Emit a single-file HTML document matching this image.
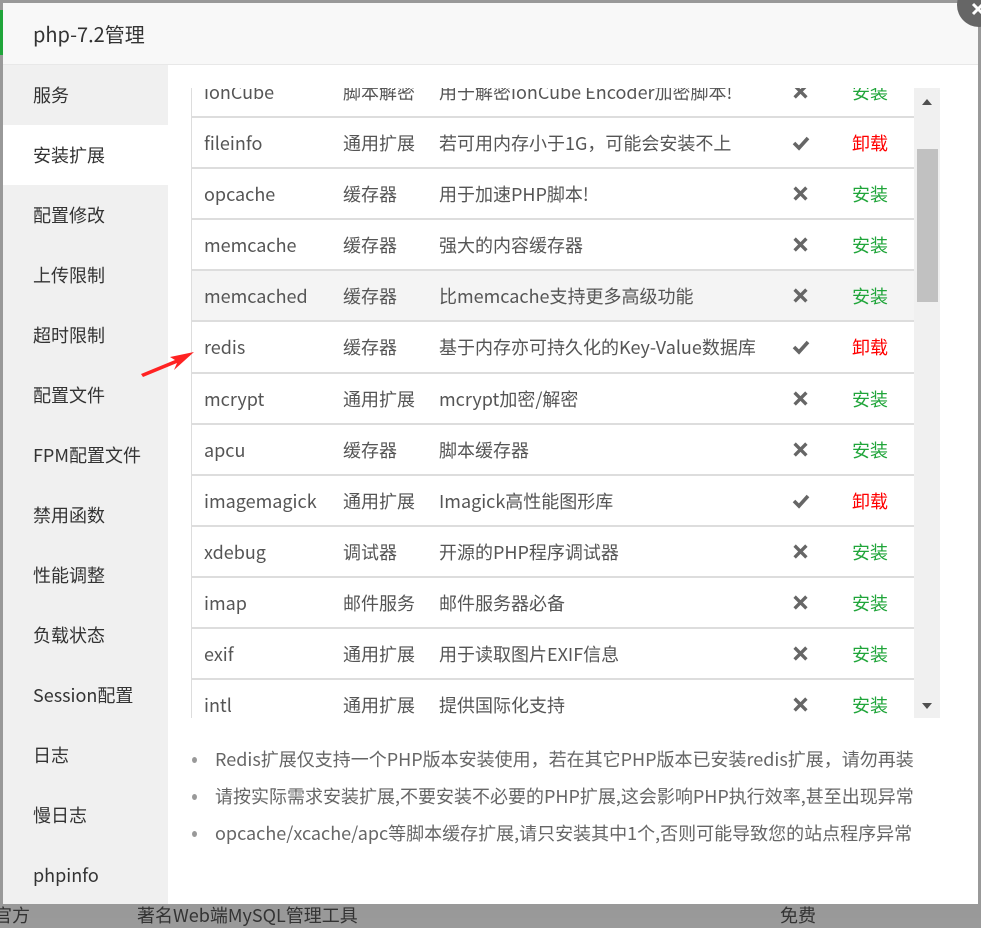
<!DOCTYPE html>
<html><head><meta charset="utf-8"><style>
*{margin:0;padding:0;box-sizing:border-box}
body{width:981px;height:918px;overflow:hidden;background:#9a9a9a;font-family:"Noto Sans CJK SC","Liberation Sans",sans-serif;position:relative}
.bg{position:absolute;top:0;left:0;width:981px;height:918px;background:#999}
.bgtext{position:absolute;top:903px;color:#333;font-size:18px;line-height:24px}
.modal{position:absolute;left:3px;top:3px;width:975px;height:901px;background:#fff;overflow:hidden}
.title{height:62px;background:#f8f8f8;border-bottom:1px solid #e8e8e8;font-size:20px;color:#333;padding-left:30px;line-height:62px}
.side{position:absolute;left:0;top:62px;width:165px;bottom:0;background:#f0f0f0}
.side div{height:60px;line-height:60px;padding-left:30px;font-size:18px;color:#333}
.side .act{background:#fff}
.tbl{position:absolute;left:188px;top:85px;width:723px;height:630px;overflow:hidden;border-left:1px solid #ddd}
.rows{position:absolute;top:-21px;left:0;width:723px}
.row{height:51.1px;border-bottom:2px solid #ddd;position:relative;font-size:18px;color:#555}
.row span{position:absolute;top:0;line-height:51px;white-space:nowrap}
.row .n{left:12px}.row .t{left:151px}.row .d{left:247px}
.row .a{left:660px;color:#20a53a}
.row .a.u{color:#f00}
.hl{background:#f4f4f4}
.sb{position:absolute;left:911px;top:85px;width:26px;height:630px;background:#f0f0f0}
.thumb{position:absolute;left:3px;top:61px;width:21px;height:153px;background:#c1c1c1}
.notes{position:absolute;left:188px;top:742px;font-size:18px;color:#666}
.notes div{height:37px;line-height:28px;position:relative;padding-left:24px;white-space:nowrap}
.notes div:before{content:"";position:absolute;left:1px;top:12px;width:5px;height:6px;border-radius:50%;background:#999}
.close{position:absolute;left:957px;top:-17px;width:44px;height:44px;border-radius:50%;background:#666}
</style></head><body>
<div class="bg"></div>
<div style="position:absolute;left:0;top:10px;width:3px;height:45px;background:#20a53a"></div>
<div class="bgtext" style="left:-6px">官方</div>
<div class="bgtext" style="left:137px">著名Web端MySQL管理工具</div>
<div class="bgtext" style="left:780px">免费</div>
<svg width="0" height="0" style="position:absolute"><defs>
<symbol id="x" viewBox="0 0 16 16"><path d="M3 3L13 13M13 3L3 13" stroke="#666" stroke-width="3.6" stroke-linecap="square"/></symbol>
<symbol id="c" viewBox="0 0 18 16"><path d="M2 8L7 13L16 3" stroke="#666" stroke-width="3.6" fill="none"/></symbol>
</defs></svg>
<div class="modal">
<div class="title">php-7.2管理</div>
<div class="side">
<div>服务</div><div class="act">安装扩展</div><div>配置修改</div><div>上传限制</div><div>超时限制</div><div>配置文件</div><div>FPM配置文件</div><div>禁用函数</div><div>性能调整</div><div>负载状态</div><div>Session配置</div><div>日志</div><div>慢日志</div><div>phpinfo</div>
</div>
<div class="tbl"><div class="rows">
<div class="row"><span class="n">ionCube</span><span class="t">脚本解密</span><span class="d">用于解密ionCube Encoder加密脚本!</span><svg style="position:absolute;left:601px;top:17px" width="15" height="15"><use href="#x"/></svg><span class="a">安装</span></div>
<div class="row"><span class="n">fileinfo</span><span class="t">通用扩展</span><span class="d">若可用内存小于1G，可能会安装不上</span><svg style="position:absolute;left:600px;top:17px" width="18" height="16"><use href="#c"/></svg><span class="a u">卸载</span></div>
<div class="row"><span class="n">opcache</span><span class="t">缓存器</span><span class="d">用于加速PHP脚本!</span><svg style="position:absolute;left:601px;top:17px" width="15" height="15"><use href="#x"/></svg><span class="a">安装</span></div>
<div class="row"><span class="n">memcache</span><span class="t">缓存器</span><span class="d">强大的内容缓存器</span><svg style="position:absolute;left:601px;top:17px" width="15" height="15"><use href="#x"/></svg><span class="a">安装</span></div>
<div class="row hl"><span class="n">memcached</span><span class="t">缓存器</span><span class="d">比memcache支持更多高级功能</span><svg style="position:absolute;left:601px;top:17px" width="15" height="15"><use href="#x"/></svg><span class="a">安装</span></div>
<div class="row"><span class="n">redis</span><span class="t">缓存器</span><span class="d">基于内存亦可持久化的Key-Value数据库</span><svg style="position:absolute;left:600px;top:17px" width="18" height="16"><use href="#c"/></svg><span class="a u">卸载</span></div>
<div class="row"><span class="n">mcrypt</span><span class="t">通用扩展</span><span class="d">mcrypt加密/解密</span><svg style="position:absolute;left:601px;top:17px" width="15" height="15"><use href="#x"/></svg><span class="a">安装</span></div>
<div class="row"><span class="n">apcu</span><span class="t">缓存器</span><span class="d">脚本缓存器</span><svg style="position:absolute;left:601px;top:17px" width="15" height="15"><use href="#x"/></svg><span class="a">安装</span></div>
<div class="row"><span class="n">imagemagick</span><span class="t">通用扩展</span><span class="d">Imagick高性能图形库</span><svg style="position:absolute;left:600px;top:17px" width="18" height="16"><use href="#c"/></svg><span class="a u">卸载</span></div>
<div class="row"><span class="n">xdebug</span><span class="t">调试器</span><span class="d">开源的PHP程序调试器</span><svg style="position:absolute;left:601px;top:17px" width="15" height="15"><use href="#x"/></svg><span class="a">安装</span></div>
<div class="row"><span class="n">imap</span><span class="t">邮件服务</span><span class="d">邮件服务器必备</span><svg style="position:absolute;left:601px;top:17px" width="15" height="15"><use href="#x"/></svg><span class="a">安装</span></div>
<div class="row"><span class="n">exif</span><span class="t">通用扩展</span><span class="d">用于读取图片EXIF信息</span><svg style="position:absolute;left:601px;top:17px" width="15" height="15"><use href="#x"/></svg><span class="a">安装</span></div>
<div class="row"><span class="n">intl</span><span class="t">通用扩展</span><span class="d">提供国际化支持</span><svg style="position:absolute;left:601px;top:17px" width="15" height="15"><use href="#x"/></svg><span class="a">安装</span></div>
</div></div>
<div class="sb"><div class="thumb"></div>
<svg style="position:absolute;left:8px;top:11px" width="10" height="6"><path d="M0 6L5 0L10 6Z" fill="#505050"/></svg>
<svg style="position:absolute;left:8px;top:615px" width="10" height="6"><path d="M0 0L5 6L10 0Z" fill="#505050"/></svg>
</div>
<svg style="position:absolute;left:138px;top:345px" width="55" height="32"><path d="M2 29L36 15L33 22L53 4L29 9L34 12L0 26Z" fill="#f22"/></svg>
<div class="notes">
<div>Redis扩展仅支持一个PHP版本安装使用，若在其它PHP版本已安装redis扩展，请勿再装</div>
<div>请按实际需求安装扩展,不要安装不必要的PHP扩展,这会影响PHP执行效率,甚至出现异常</div>
<div>opcache/xcache/apc等脚本缓存扩展,请只安装其中1个,否则可能导致您的站点程序异常</div>
</div>
</div>
<div class="close"><svg style="position:absolute;left:14px;top:19px" width="14" height="14"><path d="M2 2L12 12M12 2L2 12" stroke="#fff" stroke-width="3"/></svg></div>
</body></html>
